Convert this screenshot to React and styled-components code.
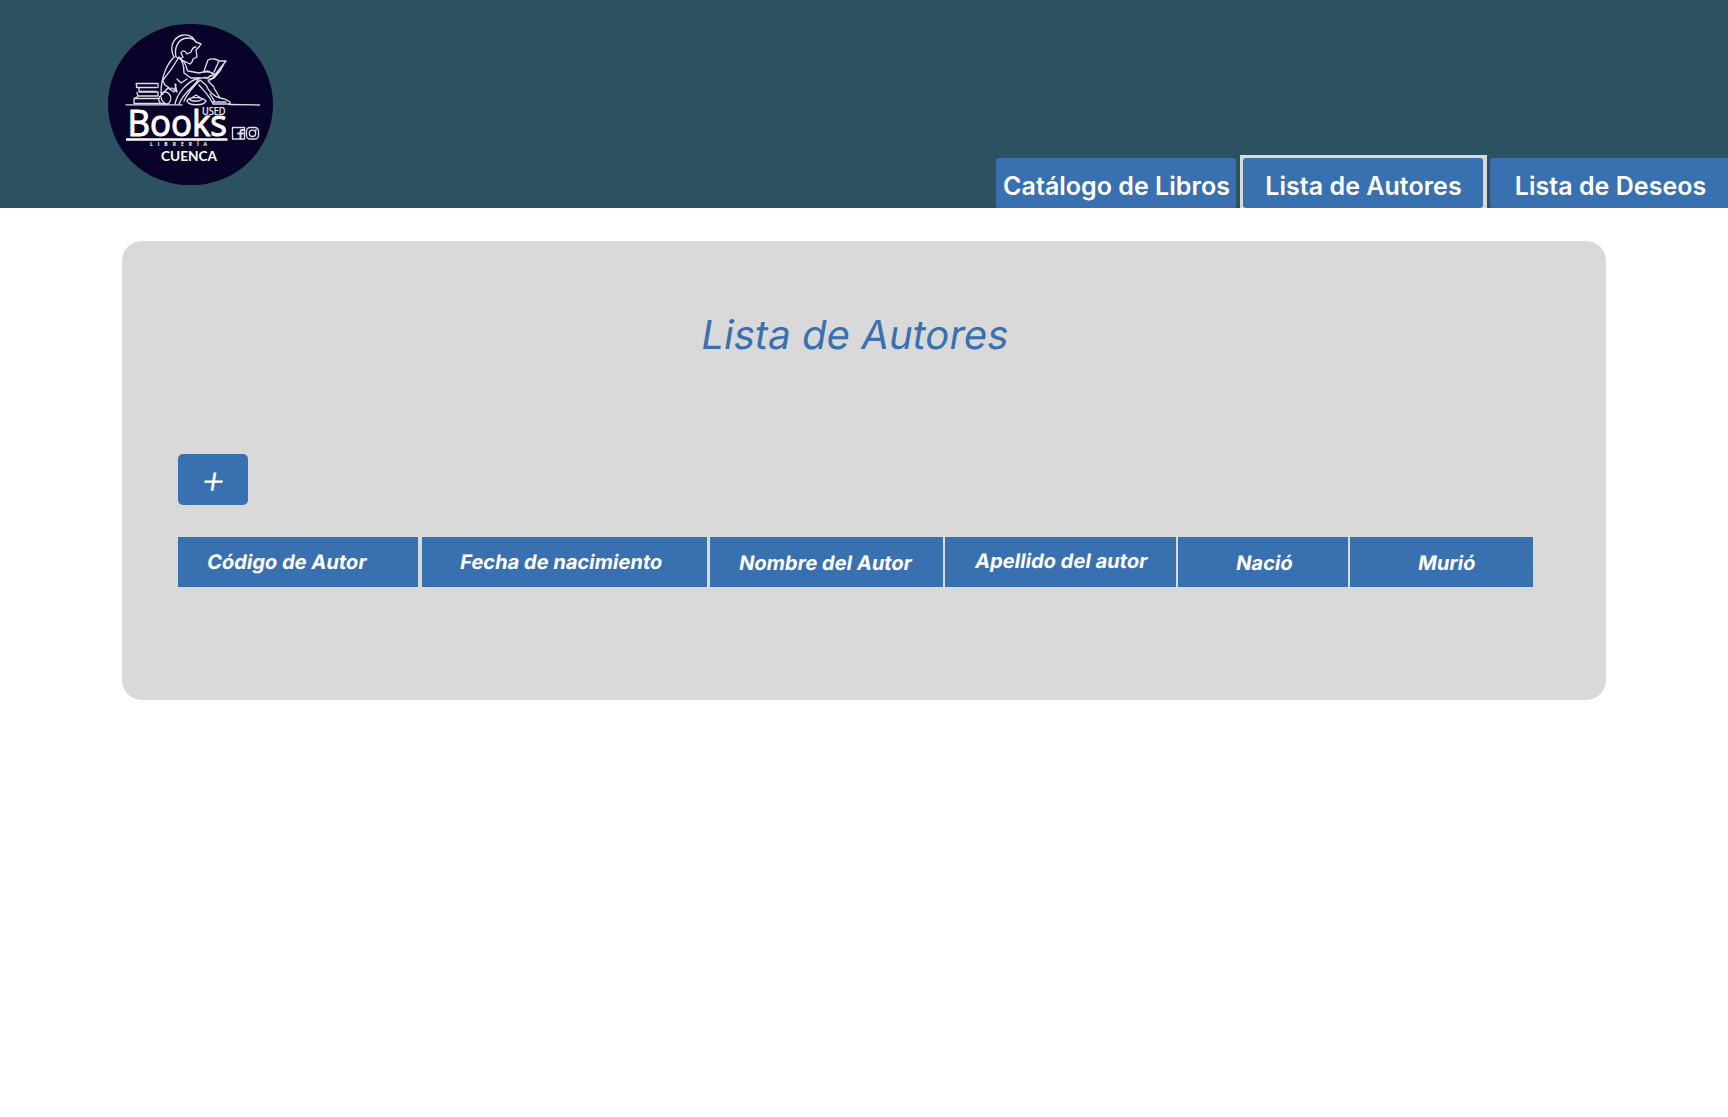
import React from "react";
import styled, { createGlobalStyle } from "styled-components";

const Global = createGlobalStyle`
  *, *::before, *::after { box-sizing: border-box; }
  body { margin: 0; background: #ffffff; font-family: Inter, "Liberation Sans", sans-serif; overflow-x: hidden; }
`;

const Page = styled.div`
  width: 100%;
  min-height: 1117px;
  overflow: hidden;
`;

const Header = styled.header`
  display: flex;
  justify-content: space-between;
  height: 208px;
  padding: 24px 0 0 108px;
  background: #2c5160;
`;

const Logo = styled.svg`
  width: 165px;
  height: 161px;
  flex: none;
  border-radius: 80.5px;
  background: #0a0329;
`;

const Tabs = styled.nav`
  display: flex;
  align-items: flex-end;
  align-self: flex-end;
  margin-right: -2px;
`;

const TabSlot = styled.div`
  padding: ${(p) => (p.$active ? "3px 4px 0 3px" : "0")};
  margin: ${(p) => (p.$active ? "0 3px 0 4px" : "0")};
  background: ${(p) => (p.$active ? "#d9d9d9" : "transparent")};
`;

const Tab = styled.button`
  display: block;
  width: 240px;
  height: 50px;
  padding: 6px 0 0 1px;
  border: 0;
  border-radius: 3px;
  background: #3970b0;
  color: #ffffff;
  font: 600 25px/30px Inter, "Liberation Sans", sans-serif;
  letter-spacing: 0.03px;
  text-align: center;
  white-space: nowrap;
`;

const Panel = styled.main`
  width: 1484px;
  height: 459px;
  margin: 33px 0 0 122px;
  padding: 70px 73px 0 56px;
  border-radius: 20px;
  background: #d9d9d9;
`;

/* Slants the upright face, which keeps its two-storey "a". */
const Slanted = styled.span`
  display: inline-block;
  transform: skewX(-9.4deg);
  transform-origin: 50% 60%;
`;

const Title = styled.h1`
  margin: 0 0 95px;
  padding-right: 2px;
  color: #3970b0;
  font: 400 40px/48px Inter, "Liberation Sans", sans-serif;
  letter-spacing: 0.06px;
  text-align: center;
`;

const AddButton = styled.button`
  display: block;
  width: 70px;
  height: 51px;
  padding: 0 0 2px;
  border: 0;
  border-radius: 5px;
  background: #3970b0;
  color: #ffffff;
  font: 300 40px/48px Inter, "Liberation Sans", sans-serif;
`;

const TableHead = styled.div`
  display: flex;
  margin-top: 32px;
`;

const HeadCell = styled.div`
  flex: none;
  width: ${(p) => p.$width}px;
  height: 50px;
  margin-right: ${(p) => p.$gap}px;
  padding: ${(p) => p.$top}px 0 0 ${(p) => p.$left}px;
  background: #3970b0;
  color: #ffffff;
  font: 700 20px/24px Inter, "Liberation Sans", sans-serif;
  letter-spacing: 0.03px;
  white-space: nowrap;
`;

const columns = [
  { label: "Código de Autor", width: 240, gap: 4, left: 29, top: 13 },
  { label: "Fecha de nacimiento", width: 285, gap: 3, left: 38, top: 13 },
  { label: "Nombre del Autor", width: 233, gap: 2, left: 29, top: 14 },
  { label: "Apellido del autor", width: 231, gap: 2, left: 30, top: 12 },
  { label: "Nació", width: 170, gap: 2, left: 58, top: 14 },
  { label: "Murió", width: 183, gap: 0, left: 68, top: 14 },
];

function BrandLogo() {
  return (
    <Logo viewBox="108 24 165 161" role="img" aria-label="Used Books">
      <g fill="none" stroke="#dedce8" strokeWidth="1.35" strokeLinecap="round" strokeLinejoin="round">
        <path d="M126 104.800H182M229 104.500L259.500 105" />
        <path d="M136 83.500H157.500M136.500 84V87.500H156.500M158 83.500V87.500M139 88V91.500H156M139 92H158V96H138L137 92.500M134 98.500H159M134 99V103.500M135 103.500H160M139 96L134 98.500" />
        <path d="M174 57C171 52 171 45 174 41C178 35 186 33 192 37L196 42L201 44L199 47L196 50L197 57L193 59L192 62L190 64L184 61M196 47C193 47 192 49 191 52L187 54C185 50 182 50 181 53L183 57L180 59L176 57C174 48 178 41 183 39C188 37 194 38 196 42" />
        <path d="M174 57C167 64 161 77 161 93M179 57C174 66 168 74 163 80M179 57C183 61 184 69 184 73L191 78H207L213 75M180 58C188 64 185 68 188 71L199 73L208 71L214 74L208 77M163 81L165 85L171 89M162 94L168 88L174 92L176 85M177 79L181 83L187 79M175 84L177 92L172 88" />
        <path d="M204 71L208 60C212 58 217 59 219 61L226 61L214 76C212 80 207 80 205 77M219 61L214 72M220 71L225 62M215 75C211 71 207 72 204 72M220 71L214 78L208 81L214 87" />
        <path d="M161 94C167 88 174 97 169 103C166 106 161 101 161 97M163 94C157 97 157 104 165 104M175 104C177 94 187 81 199 78C195 87 184 91 179 104M184 101C187 94 193 87 200 80L206 85C209 92 213 96 220 98C227 99 233 103 229 104H213C209 95 205 92 199 85M210 94L215 102M214 88L220 98M212 102H226" />
        <path d="M187 101C188 97 202 96 206 101C204 106 189 106 187 101ZM190 100C195 102 200 101 203 99M190 99L196 95L201 98" />
        <rect x="232.500" y="127.500" width="12" height="11.500" />
        <rect x="246.500" y="127.500" width="12" height="11.500" rx="3.500" />
        <circle cx="252.500" cy="133.300" r="3.200" />
        <circle cx="256" cy="130" r="0.300" />
        <path d="M243.500 130H242Q240.500 130 240.500 132V139M238 133.500H243" strokeWidth="2" />
      </g>
      <path d="M126 139.500H227.500" stroke="#ffffff" strokeWidth="2.500" />
      <g fill="#ffffff" fontFamily='"Open Sans", "Noto Sans", sans-serif'>
        <text x="127.500" y="136" fontSize="36" stroke="#ffffff" strokeWidth="1" textLength="99.500" lengthAdjust="spacingAndGlyphs">Books</text>
        <text x="202" y="115" fontSize="10" stroke="#ffffff" strokeWidth="0.2" textLength="23.500" lengthAdjust="spacingAndGlyphs">USED</text>
        <text x="150" y="146" fontSize="5" fontWeight="700" textLength="57">LIBRERÍA</text>
        <text x="161" y="160.500" fontSize="12.500" fontWeight="700" fontFamily="Lato, sans-serif" textLength="56" lengthAdjust="spacingAndGlyphs">CUENCA</text>
      </g>
    </Logo>
  );
}

export default function App() {
  return (
    <Page>
      <Global />
      <Header>
        <BrandLogo />
        <Tabs>
          <TabSlot><Tab>Catálogo de Libros</Tab></TabSlot>
          <TabSlot $active><Tab>Lista de Autores</Tab></TabSlot>
          <TabSlot><Tab>Lista de Deseos</Tab></TabSlot>
        </Tabs>
      </Header>
      <Panel>
        <Title><Slanted>Lista de Autores</Slanted></Title>
        <AddButton><Slanted>+</Slanted></AddButton>
        <TableHead>
          {columns.map((c) => (
            <HeadCell key={c.label} $width={c.width} $gap={c.gap} $left={c.left} $top={c.top}>
              <Slanted>{c.label}</Slanted>
            </HeadCell>
          ))}
        </TableHead>
      </Panel>
    </Page>
  );
}
